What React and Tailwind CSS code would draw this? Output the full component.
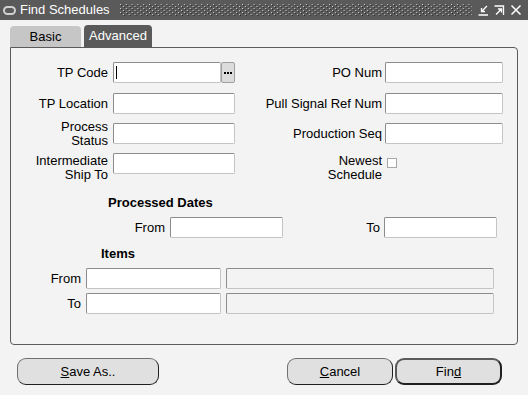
import React from 'react';

const font = { fontFamily: '"Liberation Sans", Arial, sans-serif' };

function Field({ w, disabled, cursor, className = '' }) {
  return (
    <div
      className={`h-[21px] shrink-0 rounded-[2px] border border-t-[#8c8c8c] border-l-[#8c8c8c] border-b-[#c4c4c4] border-r-[#c4c4c4] ${
        disabled ? 'bg-[#f3f3f3]' : 'bg-white'
      } relative ${className}`}
      style={{ width: w }}
    >
      {cursor && <div className="absolute left-[2px] top-[3px] h-[13px] w-px bg-black" />}
    </div>
  );
}

function Label({ w, children, className = '' }) {
  return (
    <div className={`shrink-0 text-right leading-[14px] whitespace-nowrap ${className}`} style={{ width: w }}>
      {children}
    </div>
  );
}

function TitleControls() {
  return (
    <div className="flex items-center gap-[5px] pr-[6px]">
      <svg width="11" height="11" viewBox="0 0 11 11" fill="none" stroke="#fff" strokeWidth="1.3">
        <path d="M9 1 L3.5 6.5 M3.5 3 V6.5 H7 M0.5 10 H10" />
      </svg>
      <svg width="11" height="11" viewBox="0 0 11 11" fill="none" stroke="#fff" strokeWidth="1.3">
        <path d="M0.5 1 H9.5 V10 M2 9.5 L7.5 4 M4 4 H7.5 V7.5" />
      </svg>
      <svg width="12" height="12" viewBox="0 0 12 12" fill="none" stroke="#fff" strokeWidth="1.5">
        <path d="M1.5 1.5 L10.5 10.5 M10.5 1.5 L1.5 10.5" />
      </svg>
    </div>
  );
}

function Button({ w, children, isDefault }) {
  return (
    <div
      className={`h-[27px] rounded-[9px] bg-[#e0e0e0] flex items-center justify-center text-[13px] text-black shrink-0 ${
        isDefault
          ? 'border-2 border-[#202020] border-t-[#5a5a5a] border-l-[#5a5a5a]'
          : 'border border-[#707070] border-b-[#202020] border-r-[#202020]'
      }`}
      style={{ width: w }}
    >
      {children}
    </div>
  );
}

export default function App() {
  return (
    <div className="w-[528px] h-[395px] bg-[#f3f3f3] text-[13px] text-black overflow-hidden" style={font}>
      {/* Title bar */}
      <div className="h-[20px] bg-[#5a5a5a] flex items-center">
        <div className="ml-[3px] w-[13px] h-[9px] rounded-[5px] border-2 border-[#d0d0d0]" />
        <span className="ml-[4px] text-white text-[13px] whitespace-nowrap">Find Schedules</span>
        <svg className="ml-[10px] flex-1" height="12" viewBox="0 0 364 12" preserveAspectRatio="none">
          <defs>
            <pattern id="dots" width="6" height="4" patternUnits="userSpaceOnUse">
              <rect x="0" y="0" width="1" height="1" fill="#d0d0d0" />
              <rect x="1" y="1" width="1" height="1" fill="#2a2a2a" />
              <rect x="3" y="2" width="1" height="1" fill="#d0d0d0" />
              <rect x="4" y="3" width="1" height="1" fill="#2a2a2a" />
            </pattern>
          </defs>
          <rect width="364" height="12" fill="url(#dots)" />
        </svg>
        <div className="ml-[6px]">
          <TitleControls />
        </div>
      </div>

      {/* Tabs */}
      <div className="flex items-end gap-[3px] pl-[10px] pt-[5px] h-[27px]">
        <div className="w-[71px] h-[21px] rounded-t-[4px] bg-[#c6c6c6] flex items-center justify-center">
          Basic
        </div>
        <div className="w-[68px] h-[22px] rounded-t-[4px] bg-[#5a5a5a] text-white flex items-center justify-center">
          Advanced
        </div>
      </div>

      {/* Panel */}
      <div className="ml-[10px] w-[508px] h-[298px] border border-[#5a5a5a] rounded-b-[4px] rounded-tr-[4px] pt-[14px]">
        <div className="flex items-center h-[21px]">
          <Label w={97}>TP Code</Label>
          <Field w={108} cursor className="ml-[5px]" />
          <div className="w-[14px] h-[21px] bg-[#dcdcdc] border border-[#a0a0a0] rounded-[2px] flex items-center justify-center gap-px">
            <span className="w-[2px] h-[2px] bg-black" />
            <span className="w-[2px] h-[2px] bg-black" />
            <span className="w-[2px] h-[2px] bg-black" />
          </div>
          <Label w={147}>PO Num</Label>
          <Field w={118} className="ml-[3px]" />
        </div>
        <div className="flex items-center h-[21px] mt-[10px]">
          <Label w={97}>TP Location</Label>
          <Field w={122} className="ml-[5px]" />
          <Label w={147}>Pull Signal Ref Num</Label>
          <Field w={118} className="ml-[3px]" />
        </div>
        <div className="flex items-center h-[21px] mt-[9px]">
          <Label w={97}>
            Process
            <br />
            Status
          </Label>
          <Field w={122} className="ml-[5px]" />
          <Label w={147}>Production Seq</Label>
          <Field w={118} className="ml-[3px]" />
        </div>
        <div className="flex items-start h-[21px] mt-[9px]">
          <Label w={97} className="pt-[1px]">
            Intermediate
            <br />
            Ship To
          </Label>
          <Field w={122} className="ml-[5px]" />
          <Label w={147} className="pt-[1px]">
            Newest
            <br />
            Schedule
          </Label>
          <div className="ml-[5px] mt-[5px] w-[10px] h-[10px] bg-white border border-[#a8a8a8]" />
        </div>

        {/* Processed Dates */}
        <div className="ml-[97px] mt-[22px] font-bold leading-[14px]">Processed Dates</div>
        <div className="flex items-center h-[21px] mt-[7px]">
          <Label w={154}>From</Label>
          <Field w={113} className="ml-[5px]" />
          <Label w={97}>To</Label>
          <Field w={113} className="ml-[4px]" />
        </div>

        {/* Items */}
        <div className="ml-[90px] mt-[9px] font-bold leading-[14px]">Items</div>
        <div className="flex items-center h-[21px] mt-[7px]">
          <Label w={70}>From</Label>
          <Field w={135} className="ml-[5px]" />
          <Field w={268} disabled className="ml-[5px]" />
        </div>
        <div className="flex items-center h-[21px] mt-[4px]">
          <Label w={70}>To</Label>
          <Field w={135} className="ml-[5px]" />
          <Field w={268} disabled className="ml-[5px]" />
        </div>
      </div>

      {/* Buttons */}
      <div className="flex items-center mt-[13px] pl-[17px]">
        <Button w={142}>
          <span>
            <u>S</u>ave As..
          </span>
        </Button>
        <div className="ml-[128px] flex gap-[2px]">
          <Button w={106}>
            <span>
              <u>C</u>ancel
            </span>
          </Button>
          <Button w={107} isDefault>
            <span>
              Fin<u>d</u>
            </span>
          </Button>
        </div>
      </div>
    </div>
  );
}
